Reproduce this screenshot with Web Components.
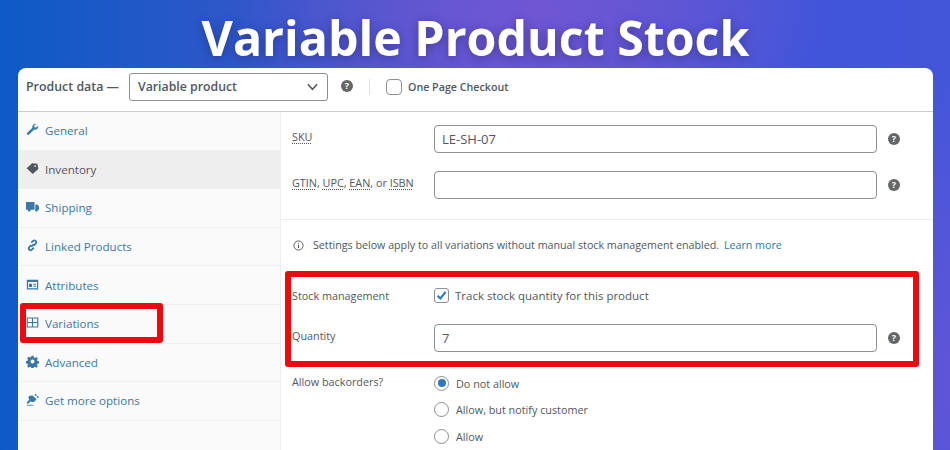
<!DOCTYPE html>
<html><head><meta charset="utf-8"><title>Variable Product Stock</title>
<style>
html,body{margin:0;padding:0;width:950px;height:450px;overflow:hidden}
body{font-family:"Open Sans","Noto Sans",sans-serif;color:#50575e}
</style></head><body>
<stock-page>
  <product-panel></product-panel>
</stock-page>
<script>
function def(name, html){
  customElements.define(name, class extends HTMLElement{
    connectedCallback(){
      if(this.shadowRoot) return;
      const r=this.attachShadow({mode:'open'});
      r.innerHTML=typeof html==='function'?html(this):html;
    }
  });
}
const ICONS={
 wrench:'<path d="M12.600 1.200a3.700 3.700 0 0 0-4.700 4.600L1.600 12a1.600 1.600 0 0 0 2.300 2.300l6.200-6.300a3.700 3.700 0 0 0 4.700-4.700l-2.300 2.300-2.100-.5-.5-2.100z"/>',
 tag:'<path d="M.8 7.800 7.500 1.500 14 2.300 15.200 8.500 8.300 14.800z"/><circle cx="11.300" cy="5" r="1.100" fill="#eee"/>',
 truck:'<path d="M0 2.500h10.500v9.500H0z"/><path d="M11.500 5.500h2.500l2 2.500v4h-4.500z"/><circle cx="4" cy="12.500" r="1.600"/><circle cx="13" cy="12.500" r="1.600"/>',
 link:'<path fill="none" stroke="currentColor" stroke-width="2.200" d="M6.500 7.500 3.800 10.200a2.300 2.300 0 0 0 3.200 3.200l2.700-2.700M6.800 9.200l2.600-2.600M9.500 8 12.200 5.300A2.300 2.300 0 0 0 9 2.100L6.500 4.600"/>',
 attr:'<path fill-rule="evenodd" d="M1 2h14v12H1zM2.500 5v7.500h11V5zM3.500 7h4v4h-4zM9 7h3.500v1.300H9zM9 9.500h3.500v1.300H9z"/>',
 grid:'<path fill="none" stroke="currentColor" stroke-width="1.400" d="M1.500 2.500h13v11h-13zM8 2.500v11M1.500 8h13"/>',
 gear:'<path fill-rule="evenodd" d="M6.700 1h2.600l.4 2 1.300.6 1.800-1.100 1.800 1.800-1.100 1.800.6 1.300 2 .4v2.600l-2 .4-.6 1.300 1.100 1.800-1.800 1.800-1.800-1.100-1.300.6-.4 2H6.700l-.4-2-1.300-.6-1.800 1.100-1.800-1.800 1.100-1.800-.6-1.300-2-.4V7.400l2-.4.6-1.300-1.100-1.800 1.800-1.800 1.800 1.100 1.300-.6zM8 5.600a2.400 2.400 0 1 0 0 4.800 2.400 2.400 0 0 0 0-4.800z"/>',
 plug:'<path d="M8.200 3 13 7.800 10.800 10a3.400 3.400 0 0 1-4.800 0L3 13H1.200v-1.800l3-3a3.400 3.400 0 0 1 0-4.800zM10.500 2.200l1.300-1.200 1.700 1.700-1.300 1.300zM13 4.800l1.300-1.300L16 5.200l-1.300 1.300z"/><path d="M1 14.500h8v1H1z"/>'
};
def('help-tip',`<style>:host{display:inline-flex;width:12px;height:12px;border-radius:50%;background:#666;color:#fff;align-items:center;justify-content:center;font:700 9px/12px "Open Sans",sans-serif}</style>?`);
def('tab-item',h=>`<style>
:host{display:flex;align-items:center;box-sizing:border-box;height:38.600px;padding:0 0 0 8px;color:#3a78a6;font-size:11.600px;border-bottom:1px solid #f0f0f0;background:#fafafa}
:host([active]){background:#eee;color:#50575e;border-bottom-color:#eee}
svg{width:13px;height:13px;fill:currentColor;margin-right:6px;flex:none;position:relative;top:-1px}
</style><svg viewBox="0 0 16 16">${ICONS[h.getAttribute('icon')]}</svg><span><slot></slot></span>`);
def('field-row',h=>`<style>
:host{display:flex;align-items:center;box-sizing:border-box;padding-left:11px;font-size:10.800px;color:#50575e}
.l{width:142px;flex:none}
.c{flex:1;display:flex;align-items:center}
</style><div class="l"><slot name="label"></slot></div><div class="c"><slot></slot></div>`);
def('text-box',`<style>
:host{display:flex;align-items:center;box-sizing:border-box;width:443px;height:28px;border:1px solid #8c8f94;border-radius:4px;background:#fff;padding-left:7px;font-size:13px;color:#50575e;margin-right:11px;flex:none}
</style><slot></slot>`);
def('radio-line',h=>`<style>
:host{display:flex;align-items:center;height:26.500px;font-size:10.800px;color:#50575e;gap:7px}
i{box-sizing:border-box;width:15px;height:15px;border:1px solid #8c8f94;border-radius:50%;display:flex;align-items:center;justify-content:center;background:#fff;flex:none}
b{width:8px;height:8px;border-radius:50%;background:#2f77b8;display:${h.hasAttribute('checked')?'block':'none'}}
</style><i><b></b></i><span><slot></slot></span>`);
def('red-box',`<style>:host{position:absolute;box-sizing:border-box;border:6px solid #ec0a0e;border-radius:3px;pointer-events:none}</style>`);
def('stock-page',`<style>
:host{display:block;position:relative;width:950px;height:450px;overflow:hidden;box-sizing:border-box;padding:0 17px 0 18px;
background:radial-gradient(ellipse 300px 170px at 540px 10px,#7056d3 0%,rgba(112,86,211,0) 100%),radial-gradient(ellipse 220px 300px at 980px 380px,#6355d8 0%,rgba(99,85,216,0) 100%),linear-gradient(90deg,#0d5ac6 0%,#2f57c9 25%,#5456cf 50%,#4a56d6 72%,#3f55da 85%,#4456da 100%)}
h1{margin:0;height:68px;text-align:center;color:#fff;font:700 48.300px/74px "Open Sans",sans-serif;text-shadow:0 2px 10px rgba(30,30,90,.45);white-space:nowrap}
</style><h1>Variable Product Stock</h1><slot></slot>`);
def('product-panel',`<style>
:host{display:block;position:relative;height:382px;background:#fff;border-radius:8px 8px 0 0;color:#50575e}
.head{height:44px;box-sizing:border-box;border-bottom:1px solid #ccc;display:flex;align-items:center;font-size:12.400px;font-weight:600;padding:0 0 6px 8px;color:#50575e}
.sel{box-sizing:border-box;width:199px;height:28px;border:1px solid #8c8f94;border-radius:3px;margin-left:10px;padding:0 8px;display:flex;align-items:center;justify-content:space-between;font-size:12.300px;font-weight:600;color:#50575e}
.sel svg{width:13px;height:13px}
.sep{width:1px;height:16px;background:#e4e4e4;margin:0 16px}
.cb{box-sizing:border-box;width:16px;height:16px;border:1px solid #8c8f94;border-radius:4px;background:#fff;margin-right:6px;display:inline-flex;flex:none}
.body{display:flex;height:338px}
.side{width:263px;flex:none;background:#fafafa;border-right:1px solid #eee;box-sizing:border-box}
.main{flex:1}
.s1{height:108px;border-bottom:1px solid #eee;box-sizing:border-box;padding-top:13px;display:flex;flex-direction:column;gap:18px}
.s1 field-row{height:28px}
.up{position:relative;top:-2.500px}
abbr{text-decoration:underline dotted;text-underline-offset:2px}
.note{height:50px;display:flex;align-items:center;padding-left:12px;font-size:10.700px;color:#50575e;box-sizing:border-box}
.note svg{width:11px;height:11px;margin-right:9px;flex:none}
.note a{color:#2f77a8;margin-left:2px}
.stock{height:30px;margin-top:10px}
.qty{height:28px;margin-top:14px}
.back{align-items:flex-start;margin-top:18px;display:flex;padding-left:11px;font-size:10.800px}
.back .l{width:142px;flex:none;padding-top:4px}
.chk{box-sizing:border-box;width:15px;height:15px;border:1px solid #8c8f94;border-radius:3px;background:#fff;margin-right:6px;display:inline-flex;align-items:center;justify-content:center;flex:none}
.chk svg{width:13px;height:13px}
.tx{font-size:11.500px}
</style>
<div class="head"><span>Product data —</span>
 <div class="sel"><span>Variable product</span><svg viewBox="0 0 14 14"><path d="M2 4.500 7 10l5-5.500" fill="none" stroke="#50575e" stroke-width="1.600"/></svg></div>
 <help-tip style="margin-left:13px;position:relative;top:-1px"></help-tip><span class="sep"></span><span class="cb"></span><span style="font-size:10.700px">One Page Checkout</span></div>
<div class="body">
 <div class="side">
  <tab-item icon="wrench">General</tab-item>
  <tab-item icon="tag" active>Inventory</tab-item>
  <tab-item icon="truck">Shipping</tab-item>
  <tab-item icon="link">Linked Products</tab-item>
  <tab-item icon="attr">Attributes</tab-item>
  <tab-item icon="grid">Variations</tab-item>
  <tab-item icon="gear">Advanced</tab-item>
  <tab-item icon="plug">Get more options</tab-item>
 </div>
 <div class="main">
  <div class="s1">
   <field-row><span slot="label" class="up"><abbr>SKU</abbr></span><text-box>LE-SH-07</text-box><help-tip></help-tip></field-row>
   <field-row><span slot="label" class="up"><abbr>GTIN</abbr>, <abbr>UPC</abbr>, <abbr>EAN</abbr>, or <abbr>ISBN</abbr></span><text-box></text-box><help-tip></help-tip></field-row>
  </div>
  <div class="note"><svg viewBox="0 0 12 12"><circle cx="6" cy="6" r="5" fill="none" stroke="#555" stroke-width="1"/><path d="M6 5.200v3.500M6 3.200v1" stroke="#555" stroke-width="1.100"/></svg><span>Settings below apply to all variations without manual stock management enabled.<a> Learn more</a></span></div>
  <field-row class="stock"><span slot="label">Stock management</span><span class="chk"><svg viewBox="0 0 14 14"><path d="M2.800 7.200 5.800 10.200 11.500 3" fill="none" stroke="#2f77b8" stroke-width="2.200"/></svg></span><span class="tx">Track stock quantity for this product</span></field-row>
  <field-row class="qty"><span slot="label" class="up">Quantity</span><text-box>7</text-box><help-tip></help-tip></field-row>
  <div class="back"><div class="l">Allow backorders?</div><div>
    <radio-line checked>Do not allow</radio-line>
    <radio-line>Allow, but notify customer</radio-line>
    <radio-line>Allow</radio-line></div></div>
 </div>
</div>
<red-box style="left:2px;top:235px;width:143px;height:40px"></red-box>
<red-box style="left:267px;top:203px;width:634px;height:96px"></red-box>
`);
</script>
</body></html>
